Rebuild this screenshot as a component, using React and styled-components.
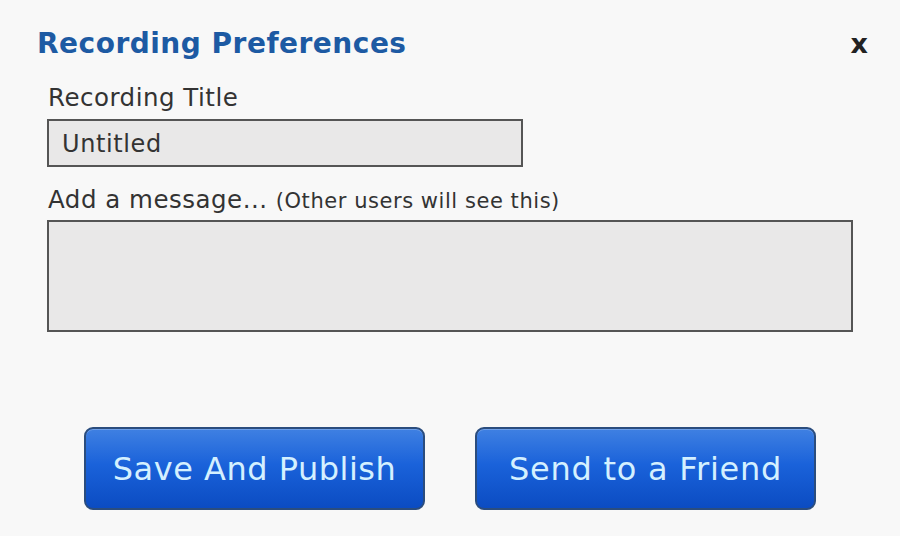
import React from "react";
import styled, { createGlobalStyle } from "styled-components";

const Global = createGlobalStyle`
  html, body { margin: 0; padding: 0; background: #f8f8f8; }
  body { font-family: "DejaVu Sans", Verdana, sans-serif; }
`;

const Dialog = styled.div`
  width: 900px;
  height: 536px;
  box-sizing: border-box;
  background: #f8f8f8;
  display: flex;
  flex-direction: column;
`;

const Header = styled.div`
  display: flex;
  align-items: center;
  justify-content: space-between;
  padding: 26px 32px 0 37px;
  height: 36px;
`;

const Title = styled.h1`
  margin: 0;
  font-size: 28px;
  letter-spacing: 0.5px;
  font-weight: bold;
  color: #1d5aa3;
  line-height: 36px;
`;

const Close = styled.button`
  border: none;
  background: none;
  padding: 0;
  font-family: "DejaVu Sans", Verdana, sans-serif;
  font-size: 27px;
  font-weight: bold;
  color: #222;
  line-height: 36px;
  cursor: pointer;
`;

const Form = styled.div`
  display: flex;
  flex-direction: column;
  padding: 21px 0 0 47px;
`;

const Label = styled.label`
  font-size: 24.5px;
  letter-spacing: 0.5px;
  color: #333;
  line-height: 30px;
  padding-left: 1px;
  margin-bottom: ${(p) => p.$mb || 4}px;
`;

const Hint = styled.span`
  font-size: 21px;
  letter-spacing: 0.55px;
`;

const Input = styled.div`
  box-sizing: border-box;
  width: ${(p) => p.$w}px;
  height: ${(p) => p.$h}px;
  background: #e9e8e8;
  border: 2px solid #555;
  font-size: 24px;
  letter-spacing: 0.6px;
  color: #333;
  padding: 9px 13px;
  line-height: 29px;
  margin-bottom: ${(p) => p.$mb || 0}px;
`;

const Buttons = styled.div`
  display: flex;
  gap: 50px;
  padding: 95px 0 0 84px;
`;

const Button = styled.button`
  width: 341px;
  height: 83px;
  border: 2px solid #2b4d7e;
  border-radius: 9px;
  background: linear-gradient(180deg, #3f80e2 0%, #1a62da 45%, #0b4cc2 100%);
  box-shadow: inset 0 1px 0 rgba(255,255,255,0.25);
  color: #d4f0ff;
  font-family: "DejaVu Sans", Verdana, sans-serif;
  font-size: 32px;
  letter-spacing: ${(p) => p.$ls}px;
  padding: 0;
  cursor: pointer;
`;

export default function App() {
  return (
    <>
      <Global />
      <Dialog>
        <Header>
          <Title>Recording Preferences</Title>
          <Close>x</Close>
        </Header>
        <Form>
          <Label $mb={6}>Recording Title</Label>
          <Input $w={476} $h={48} $mb={18}>Untitled</Input>
          <Label>
            Add a message... <Hint>(Other users will see this)</Hint>
          </Label>
          <Input $w={806} $h={112} />
        </Form>
        <Buttons>
          <Button $ls={0.5}>Save And Publish</Button>
          <Button $ls={0.75}>Send to a Friend</Button>
        </Buttons>
      </Dialog>
    </>
  );
}
